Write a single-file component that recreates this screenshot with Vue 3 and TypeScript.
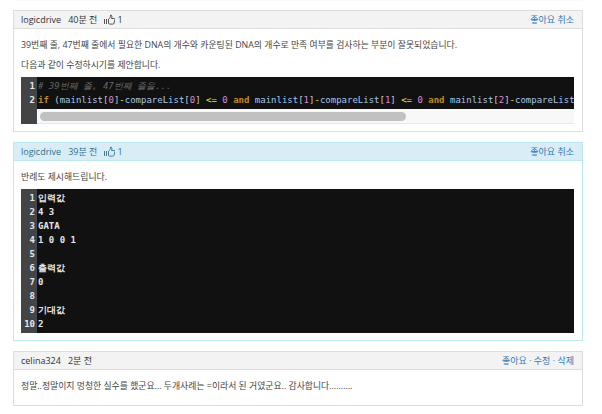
<script setup lang="ts">
interface Seg { t: string; c?: string }
const n = 'n', p = 'p', o = 'o', k = 'k', d = 'd'
const line2: Seg[] = [
  { t: 'if', c: k }, { t: ' (' , c: p }, { t: 'mainlist', c: n }, { t: '[', c: p }, { t: '0', c: d }, { t: ']', c: p }, { t: '-', c: o }, { t: 'compareList', c: n }, { t: '[', c: p }, { t: '0', c: d }, { t: ']', c: p }, { t: ' ' }, { t: '<=', c: o }, { t: ' ' }, { t: '0', c: d }, { t: ' ' }, { t: 'and', c: k }, { t: ' ' },
  { t: 'mainlist', c: n }, { t: '[', c: p }, { t: '1', c: d }, { t: ']', c: p }, { t: '-', c: o }, { t: 'compareList', c: n }, { t: '[', c: p }, { t: '1', c: d }, { t: ']', c: p }, { t: ' ' }, { t: '<=', c: o }, { t: ' ' }, { t: '0', c: d }, { t: ' ' }, { t: 'and', c: k }, { t: ' ' },
  { t: 'mainlist', c: n }, { t: '[', c: p }, { t: '2', c: d }, { t: ']', c: p }, { t: '-', c: o }, { t: 'compareList', c: n }, { t: '[', c: p }, { t: '2', c: d }, { t: ']', c: p }, { t: ' ' }, { t: '<=', c: o }, { t: ' ' }, { t: '0', c: d },
]
const sample = ['입력값', '4 3', 'GATA', '1 0 0 1', '', '출력값', '0', '', '기대값', '2']
const thumbPath = 'M.5 5v5M2.500 5v5M4.500 5.200c1.300-.8 2-1.800 2.100-4.200 1.300 0 1.700 1.500.9 3.500h2.500c.8 0 1 .6.800 1.300l-.8 3.500c-.2.600-.6.800-1.200.8H6c-.8 0-1.500-.4-1.500-.8z'
</script>

<template>
  <div class="page">
    <div class="edge"></div>
    <section class="panel">
      <header class="head">
        <div class="meta">
          <span class="user">logicdrive</span><span>40분 전</span>
          <span class="likes">
            <svg class="thumb" viewBox="0 0 11 11" width="11" height="11"><path :d="thumbPath" fill="none" stroke="#444" stroke-width=".9"/></svg>1
          </span>
        </div>
        <a class="act">좋아요 취소</a>
      </header>
      <div class="body">
        <p>39번째 줄, 47번째 줄에서 필요한 DNA의 개수와 카운팅된 DNA의 개수로 만족 여부를 검사하는 부분이 잘못되었습니다.</p>
        <p class="before-code">다음과 같이 수정하시기를 제안합니다.</p>
        <div class="code">
          <div class="gutter"><div>1</div><div>2</div></div>
          <div class="src-wrap">
            <div class="src">
              <div class="c"># 39번째 줄, 47번째 줄을...</div>
              <div><span v-for="(s, i) in line2" :key="i" :class="s.c">{{ s.t }}</span></div>
            </div>
            <div class="track"><div class="thumbbar"></div></div>
          </div>
        </div>
      </div>
    </section>

    <section class="panel mine">
      <header class="head">
        <div class="meta">
          <span class="user">logicdrive</span><span>39분 전</span>
          <span class="likes">
            <svg class="thumb" viewBox="0 0 11 11" width="11" height="11"><path :d="thumbPath" fill="none" stroke="#31708f" stroke-width=".9"/></svg>1
          </span>
        </div>
        <a class="act">좋아요 취소</a>
      </header>
      <div class="body">
        <p class="before-code">반례도 제시해드립니다.</p>
        <div class="code">
          <div class="gutter"><div v-for="i in 10" :key="i">{{ i }}</div></div>
          <div class="src-wrap">
            <div class="src plain"><div v-for="(l, i) in sample" :key="i" class="ln">{{ l }}</div></div>
          </div>
        </div>
      </div>
    </section>

    <section class="panel">
      <header class="head">
        <div class="meta"><span class="user">celina324</span><span>2분 전</span></div>
        <div class="act">좋아요 · 수정 · 삭제</div>
      </header>
      <div class="body short">
        <p>정말..정말이지 멍청한 실수를 했군요... 두개사례는 =이라서 된 거였군요.. 감사합니다..........</p>
      </div>
    </section>
  </div>
</template>

<style>
html, body { margin: 0; background: #fff; }
</style>

<style scoped>
.page {
  width: 570px;
  padding: 0 19px 0 13px;
  display: flex;
  flex-direction: column;
  gap: 10px;
  font-family: "Open Sans", "Noto Sans CJK KR", sans-serif;
  font-size: 9px;
  color: #333;
}
.edge { height: 1px; margin-bottom: -1px; background: #fafafa; }
.panel { border: 1px solid #ddd; background: #fff; }
.head {
  height: 17px;
  padding: 0 8px 0 7px;
  display: flex;
  align-items: center;
  justify-content: space-between;
  background: #f3f3f3;
  border-bottom: 1px solid #ddd;
}
.meta { display: flex; align-items: center; gap: 7px; }
.likes { display: flex; align-items: center; gap: 2px; }
.thumb { display: block; }
.act { color: #337ab7; }
.body { padding: 10px 8px 7px 7px; font-size: 8.85px; color: #444; }
p { margin: 0 0 7px; line-height: 13px; }
.before-code { margin-bottom: 5px; }
.short { padding-bottom: 5px; }
.mine { border-color: #bce8f1; }
.mine .head { background: #d9edf7; border-bottom-color: #bce8f1; color: #31708f; }
.code {
  display: flex;
  font-family: "DejaVu Sans Mono", monospace;
  font-size: 9px;
  line-height: 14px;
  background: #111;
  color: #eee;
  font-weight: 700;
}
.gutter {
  width: 16px;
  padding: 2px 1px 0 0;
  box-sizing: border-box;
  flex: none;
  text-align: right;
  background: #444;
  color: #e8e8e8;
  border-right: 1px solid #3d4a55;
}
.src-wrap { flex: 1; min-width: 0; overflow: hidden; }
.src { padding: 2px 0 2px 1px; white-space: pre; overflow: hidden; background: #111; color: #ddd; font-weight: 400; }
.plain { color: #e6e6e6; font-weight: 700; }
.ln { height: 14px; }
.track { height: 15px; background: #f8f8f8; border-bottom: 1px solid #e8e8e8; padding: 3px 0 0 3px; box-sizing: border-box; }
.thumbbar { width: 366px; height: 9px; border-radius: 4.5px; background: #c1c1c1; }
.c { color: #666; font-style: italic; }
.n { color: #a6c6ec; }
.p { color: #c8c8c8; }
.o { color: #e8e84a; }
.k { color: #c08a20; font-weight: 700; }
.d { color: #d98ad9; }
</style>
